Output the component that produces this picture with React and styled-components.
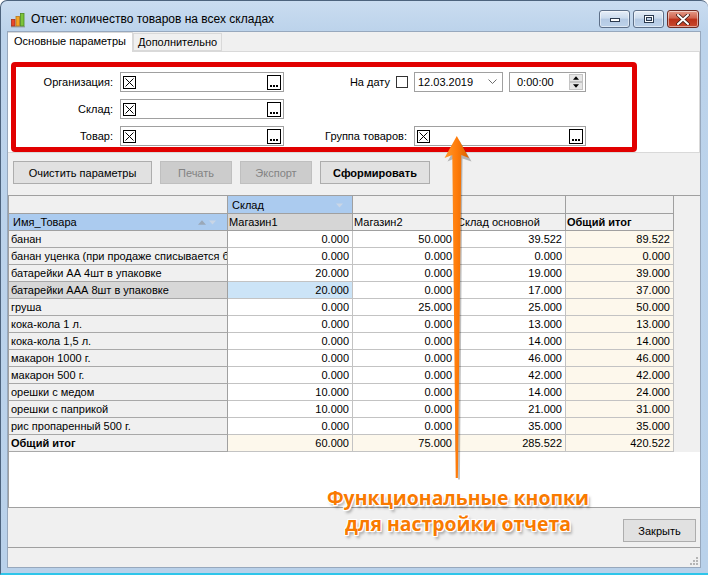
import React from "react";
import styled, { createGlobalStyle } from "styled-components";

const GlobalStyle = createGlobalStyle`
  html, body {
    margin: 0;
    padding: 0;
    background: #fff;
  }
  body {
    font-family: Tahoma, "Liberation Sans", Arial, sans-serif;
    font-size: 11px;
    color: #000;
  }
  * {
    box-sizing: border-box;
  }
`;

const rows = [
  ["банан", "0.000", "50.000", "39.522", "89.522"],
  ["банан уценка (при продаже списывается брак)", "0.000", "0.000", "0.000", "0.000"],
  ["батарейки АА 4шт в упаковке", "20.000", "0.000", "19.000", "39.000"],
  ["батарейки ААА 8шт в упаковке", "20.000", "0.000", "17.000", "37.000"],
  ["груша", "0.000", "25.000", "25.000", "50.000"],
  ["кока-кола 1 л.", "0.000", "0.000", "13.000", "13.000"],
  ["кока-кола 1,5 л.", "0.000", "0.000", "14.000", "14.000"],
  ["макарон 1000 г.", "0.000", "0.000", "46.000", "46.000"],
  ["макарон 500 г.", "0.000", "0.000", "42.000", "42.000"],
  ["орешки с медом", "10.000", "0.000", "14.000", "24.000"],
  ["орешки с паприкой", "10.000", "0.000", "21.000", "31.000"],
  ["рис пропаренный 500 г.", "0.000", "0.000", "35.000", "35.000"],
];
const totals = ["Общий итог", "60.000", "75.000", "285.522", "420.522"];
const selectedRow = 3;

const tones = {
  white: "#ffffff",
  head: "#f0f0f0",
  rowhead: "#f0f0f0",
  sel: "#d7d7d7",
  blue: "#cce4f7",
  total: "#fdf8ec",
  hblue: "#abcbef",
  hgray: "#d6d6d6",
};

const Page = styled.div`
  position: relative;
  width: 708px;
  height: 575px;
  overflow: hidden;
`;

const Window = styled.div`
  width: 708px;
  height: 575px;
  display: flex;
  flex-direction: column;
  background: linear-gradient(180deg, #cadcf0 0px, #bcd3eb 30px, #b9d1ea 100%);
  border-top: 1px solid #4d637d;
  border-left: 1px solid #4d637d;
  border-bottom: 2px solid #2ec5ea;
  border-radius: 7px 7px 0 0;
  padding-left: 6px;
`;

const TitleBar = styled.div`
  height: 30px;
  flex: none;
  display: flex;
  align-items: flex-start;
  padding: 9px 9px 0 3px;
`;

const Title = styled.div`
  margin: 1px 0 0 5px;
  font-family: "Segoe UI", "Liberation Sans", Arial, sans-serif;
  font-size: 12px;
  line-height: 16px;
  color: #000;
  white-space: nowrap;
`;

const Controls = styled.div`
  margin-left: auto;
  display: flex;
  gap: 3px;
`;

const CtrlButton = styled.div`
  width: ${(p) => (p.$close ? "32px" : "31px")};
  height: 18px;
  border: 1px solid ${(p) => (p.$close ? "#6d2a22" : "#5d6f88")};
  border-radius: 3px;
  display: flex;
  align-items: center;
  justify-content: center;
  background: ${(p) =>
    p.$close
      ? "linear-gradient(180deg, #e49a88 0%, #d0624c 45%, #bb3018 50%, #c84a30 100%)"
      : "linear-gradient(180deg, #e6eef8 0%, #cbdbed 45%, #b4c9e3 50%, #bdd2ea 100%)"};
  box-shadow: inset 0 0 0 1px rgba(255, 255, 255, 0.5);
`;

const Client = styled.div`
  flex: 1;
  margin: 0 7px 5px 0;
  border: 1px solid #97a8bd;
  background: #f0f0f0;
  display: flex;
  flex-direction: column;
`;

const TabStrip = styled.div`
  height: 19px;
  flex: none;
  display: flex;
  align-items: flex-end;
  position: relative;
  z-index: 1;
`;

const Tab = styled.div`
  height: ${(p) => (p.$active ? "20px" : "18px")};
  padding: 0 ${(p) => (p.$active ? "6px" : "4px")};
  margin-bottom: ${(p) => (p.$active ? "-1px" : "0")};
  background: ${(p) => (p.$active ? "#fff" : "#f0f0f0")};
  border: 1px solid #d9d9d9;
  border-bottom: ${(p) => (p.$active ? "none" : "1px solid #d9d9d9")};
  border-left: ${(p) => (p.$active ? "none" : "1px solid #d9d9d9")};
  line-height: 16px;
  white-space: nowrap;
`;

const Panel = styled.div`
  height: 102px;
  flex: none;
  background: #fff;
  border: 1px solid #d9d9d9;
  border-left: none;
  padding-top: 20px;
`;

const Form = styled.div`
  display: grid;
  grid-template-columns: 112px 164px 130px 172px;
  grid-auto-rows: 20px;
  row-gap: 7px;
`;

const Label = styled.div`
  display: flex;
  align-items: center;
  justify-content: flex-end;
  gap: 6px;
  padding-right: ${(p) => p.$pad || 0}px;
  white-space: nowrap;
`;

const Field = styled.div`
  height: 20px;
  width: ${(p) => p.$w || "100%"};
  border: 1px solid #a0a0a0;
  background: #fff;
  display: flex;
  align-items: center;
  justify-content: space-between;
  padding: 0 2px 0 2px;
`;

const FieldText = styled.span`
  font-size: 11px;
  padding-left: ${(p) => p.$pad || 1}px;
`;

const DateRow = styled.div`
  display: flex;
  gap: 6px;
`;

const Spinner = styled.div`
  display: flex;
  flex-direction: column;
`;

const SpinBtn = styled.div`
  width: 14px;
  height: 8px;
  background: #e6e6e6;
  border: 1px solid #c4c4c4;
  display: flex;
  align-items: center;
  justify-content: center;
`;

const Check = styled.div`
  width: 12px;
  height: 12px;
  border: 1px solid #333;
  background: #fff;
`;

const Toolbar = styled.div`
  height: 42px;
  flex: none;
  display: flex;
  gap: 8px;
  padding: 8px 0 0 5px;
`;

const Button = styled.div`
  height: 23px;
  width: ${(p) => p.$w}px;
  display: flex;
  align-items: center;
  justify-content: center;
  border: 1px solid ${(p) => (p.$disabled ? "#bfbfbf" : "#adadad")};
  background: ${(p) => (p.$disabled ? "#cccccc" : "#e1e1e1")};
  color: ${(p) => (p.$disabled ? "#838383" : "#000")};
  font-weight: ${(p) => (p.$bold ? 700 : 400)};
  white-space: nowrap;
`;

const GridArea = styled.div`
  height: 312px;
  flex: none;
  display: flex;
  align-items: flex-start;
  background: #fff;
  border-top: 1px solid #a0a0a0;
  border-left: 1px solid #a0a0a0;
`;

const Table = styled.div`
  display: grid;
  grid-template-columns: 219px 125px 103px 110px 108px;
  grid-template-rows: 18px;
  grid-auto-rows: 17px;
`;

const RightStrip = styled.div`
  flex: 1;
  height: 256px;
  background: #f0f0f0;
`;

const Cell = styled.div`
  line-height: 17px;
  padding: 0 ${(p) => (p.$num ? "3px" : "2px")} 0 2px;
  text-align: ${(p) => (p.$num ? "right" : "left")};
  white-space: nowrap;
  overflow: hidden;
  text-overflow: clip;
  border-right: 1px solid ${(p) => (p.$first ? "#a0a0a0" : "#c3c3c3")};
  border-bottom: 1px solid ${(p) => (p.$first ? "#a8a8a8" : "#c3c3c3")};
  background: ${(p) => tones[p.$tone || "white"]};
  font-weight: ${(p) => (p.$bold ? 700 : 400)};
  grid-column: ${(p) => (p.$span ? `span ${p.$span}` : "auto")};
`;

const HeadCell = styled(Cell)`
  display: flex;
  align-items: center;
  justify-content: space-between;
  padding: 1px 3px 0 1px;
  border-right-color: #a0a0a0;
  border-bottom-color: #a0a0a0;
`;

const HeadIcons = styled.span`
  display: flex;
  align-items: center;
  gap: 3px;
  padding-right: ${(p) => p.$pad || 2}px;
`;

const BottomBar = styled.div`
  height: 40px;
  flex: none;
  border-top: 1px solid #a0a0a0;
  display: flex;
  justify-content: flex-end;
  padding: 11px 4px 0 0;
`;

const StatusBar = styled.div`
  height: 20px;
  flex: none;
  border-top: 1px solid #a0a0a0;
  display: flex;
  justify-content: flex-end;
  align-items: flex-end;
  padding: 0 2px 2px 0;
`;

const RedFrame = styled.div`
  position: absolute;
  left: 11px;
  top: 62px;
  width: 626px;
  height: 90px;
  border: 5px solid #e10000;
  border-radius: 4px;
  pointer-events: none;
`;

const ArrowLayer = styled.svg`
  position: absolute;
  left: 0;
  top: 0;
  pointer-events: none;
`;

const Callout = styled.div`
  position: absolute;
  left: 258px;
  top: 485px;
  width: 400px;
  text-align: center;
  font-family: "Open Sans", "Liberation Sans", sans-serif;
  font-weight: 700;
  font-size: 19.4px;
  line-height: 26px;
  color: #f97a00;
  text-shadow: 0 0 2px #fff, 0 0 2px #fff, 1px 1px 0 #fff, -1px -1px 0 #fff,
    1px -1px 0 #fff, -1px 1px 0 #fff, 2px 3px 3px rgba(0, 0, 0, 0.35);
  pointer-events: none;
`;

const AppIcon = () => (
  <svg width="16" height="16" viewBox="0 0 16 16">
    <rect x="1" y="14" width="14" height="1.5" fill="#9aa3ad" />
    <rect x="1.5" y="7.5" width="3.5" height="6.5" fill="#e8482b" stroke="#a8321c" strokeWidth="0.8" />
    <rect x="6" y="4.5" width="3.5" height="9.5" fill="#f5a623" stroke="#b8761a" strokeWidth="0.8" />
    <rect x="10.5" y="1.5" width="3.5" height="12.5" fill="#7cc43a" stroke="#4d8a1f" strokeWidth="0.8" />
  </svg>
);

const ClearBox = () => (
  <svg width="13" height="13" viewBox="0 0 13 13">
    <rect x="0.5" y="0.5" width="12" height="12" fill="#fff" stroke="#000" />
    <path d="M2.5 2.5 L10.5 10.5 M10.5 2.5 L2.5 10.5" stroke="#000" strokeWidth="1" />
  </svg>
);

const DotsBox = () => (
  <svg width="14" height="15" viewBox="0 0 14 15">
    <rect x="0.5" y="0.5" width="13" height="14" fill="#fff" stroke="#000" />
    <rect x="3" y="10" width="2" height="2" fill="#000" />
    <rect x="6" y="10" width="2" height="2" fill="#000" />
    <rect x="9" y="10" width="2" height="2" fill="#000" />
  </svg>
);

const Lookup = ({ w }) => (
  <Field $w={w}>
    <ClearBox />
    <DotsBox />
  </Field>
);

const Chevron = () => (
  <svg width="9" height="6" viewBox="0 0 9 6">
    <path d="M0.5 0.5 L4.5 4.5 L8.5 0.5" fill="none" stroke="#6d6d6d" strokeWidth="1" />
  </svg>
);

const Tri = ({ up, color = "#000", size = 7 }) => (
  <svg width={size} height={Math.ceil(size / 2) + 1} viewBox="0 0 7 4">
    {up ? <path d="M0 4 L3.5 0 L7 4 Z" fill={color} /> : <path d="M0 0 L3.5 4 L7 0 Z" fill={color} />}
  </svg>
);

const MinGlyph = () => (
  <svg width="12" height="8" viewBox="0 0 12 8">
    <rect x="1.5" y="3.5" width="9" height="3" fill="#fff" stroke="#2b3a4f" />
  </svg>
);

const MaxGlyph = () => (
  <svg width="12" height="10" viewBox="0 0 12 10">
    <rect x="1.5" y="1.5" width="9" height="7" fill="none" stroke="#2b3a4f" />
    <rect x="2.5" y="2.5" width="7" height="5" fill="none" stroke="#fff" />
    <rect x="3.5" y="3.5" width="5" height="3" fill="none" stroke="#2b3a4f" />
  </svg>
);

const CloseGlyph = () => (
  <svg width="14" height="11" viewBox="0 0 14 11">
    <path d="M2 1 L12 10 M12 1 L2 10" stroke="#3a1a14" strokeWidth="3.6" strokeLinecap="round" />
    <path d="M2 1 L12 10 M12 1 L2 10" stroke="#fff" strokeWidth="2" strokeLinecap="round" />
  </svg>
);

const Grip = () => (
  <svg width="9" height="9" viewBox="0 0 9 9">
    {[
      [7, 1],
      [4, 4],
      [7, 4],
      [1, 7],
      [4, 7],
      [7, 7],
    ].map(([x, y]) => (
      <rect key={`${x}-${y}`} x={x} y={y} width="2" height="2" fill="#b5b5b5" />
    ))}
  </svg>
);

const Arrow = () => (
  <ArrowLayer width="708" height="575" viewBox="0 0 708 575">
    <defs>
      <linearGradient id="shaft" x1="0" x2="1" y1="0" y2="0">
        <stop offset="0" stopColor="#ff9a2e" />
        <stop offset="0.5" stopColor="#ff7c0a" />
        <stop offset="1" stopColor="#d86200" />
      </linearGradient>
    </defs>
    <path
      d="M458 139 L470 160 L461 157 L458.4 478 L456.6 478 L453 157 L446 160 Z"
      fill="rgba(0,0,0,0.25)"
      transform="translate(1.5,1.5)"
    />
    <path
      d="M456.8 136 L469 158 L461.3 155 L457.9 478 L455.7 478 L452.3 155 L444.5 158 Z"
      fill="url(#shaft)"
    />
  </ArrowLayer>
);

export default function App() {
  return (
    <Page>
      <GlobalStyle />
      <Window>
        <TitleBar>
          <span style={{ marginTop: 2 }}>
            <AppIcon />
          </span>
          <Title>Отчет: количество товаров на всех складах</Title>
          <Controls>
            <CtrlButton>
              <MinGlyph />
            </CtrlButton>
            <CtrlButton>
              <MaxGlyph />
            </CtrlButton>
            <CtrlButton $close>
              <CloseGlyph />
            </CtrlButton>
          </Controls>
        </TitleBar>
        <Client>
          <TabStrip>
            <Tab $active>Основные параметры</Tab>
            <Tab>Дополнительно</Tab>
          </TabStrip>
          <Panel>
            <Form>
              <Label $pad={7}>Организация:</Label>
              <Lookup />
              <Label $pad={6}>
                На дату
                <Check />
              </Label>
              <DateRow>
                <Field $w="89px">
                  <FieldText>12.03.2019</FieldText>
                  <span style={{ paddingRight: 3, display: "flex" }}>
                    <Chevron />
                  </span>
                </Field>
                <Field $w="77px">
                  <FieldText $pad={5}>0:00:00</FieldText>
                  <Spinner>
                    <SpinBtn>
                      <Tri up size={6} />
                    </SpinBtn>
                    <SpinBtn>
                      <Tri size={6} />
                    </SpinBtn>
                  </Spinner>
                </Field>
              </DateRow>

              <Label $pad={7}>Склад:</Label>
              <Lookup />
              <span />
              <span />

              <Label $pad={7}>Товар:</Label>
              <Lookup />
              <Label $pad={7}>Группа товаров:</Label>
              <Lookup />
            </Form>
          </Panel>
          <Toolbar>
            <Button $w={139}>Очистить параметры</Button>
            <Button $w={72} $disabled>
              Печать
            </Button>
            <Button $w={72} $disabled>
              Экспорт
            </Button>
            <Button $w={110} $bold>
              Сформировать
            </Button>
          </Toolbar>
          <GridArea>
            <Table>
              <HeadCell $tone="head" $first />
              <HeadCell $tone="hblue">
                <span>&nbsp;Склад</span>
                <HeadIcons $pad={6}>
                  <Tri color="#c9d6e6" size={7} />
                </HeadIcons>
              </HeadCell>
              <HeadCell $tone="head" $span={2} />
              <HeadCell $tone="head" />

              <HeadCell $tone="hblue" $first>
                <span>&nbsp;Имя_Товара</span>
                <HeadIcons $pad={8}>
                  <Tri up color="#9aa8b8" size={8} />
                  <Tri color="#c9d6e6" size={7} />
                </HeadIcons>
              </HeadCell>
              <HeadCell $tone="hgray">Магазин1</HeadCell>
              <HeadCell $tone="head">Магазин2</HeadCell>
              <HeadCell $tone="head">Склад основной</HeadCell>
              <HeadCell $tone="head" $bold>
                Общий итог
              </HeadCell>

              {rows.map((r, i) => (
                <React.Fragment key={r[0]}>
                  <Cell $first $tone={i === selectedRow ? "sel" : "rowhead"}>
                    {r[0]}
                  </Cell>
                  <Cell $num $tone={i === selectedRow ? "blue" : "white"}>
                    {r[1]}
                  </Cell>
                  <Cell $num>{r[2]}</Cell>
                  <Cell $num>{r[3]}</Cell>
                  <Cell $num $tone="total">
                    {r[4]}
                  </Cell>
                </React.Fragment>
              ))}

              <Cell $first $tone="rowhead" $bold>
                {totals[0]}
              </Cell>
              {totals.slice(1).map((t) => (
                <Cell key={t} $num $tone="total">
                  {t}
                </Cell>
              ))}
            </Table>
            <RightStrip />
          </GridArea>
          <BottomBar>
            <Button $w={73}>Закрыть</Button>
          </BottomBar>
          <StatusBar>
            <Grip />
          </StatusBar>
        </Client>
      </Window>
      <RedFrame />
      <Arrow />
      <Callout>
        Функциональные кнопки
        <br />
        для настройки отчета
      </Callout>
    </Page>
  );
}
